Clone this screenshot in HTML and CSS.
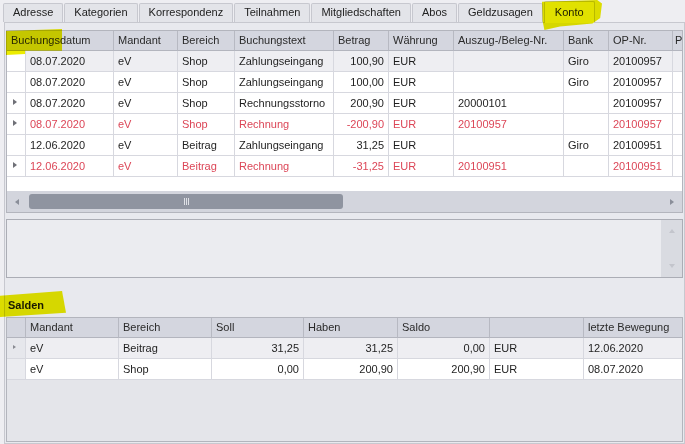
FILE: index.html
```html
<!DOCTYPE html>
<html lang="de">
<head>
<meta charset="utf-8">
<title>Konto</title>
<link rel="stylesheet" href="styles.css">
</head>
<body>
<div class="tabs">
  <div class="tab">Adresse</div>
  <div class="tab">Kategorien</div>
  <div class="tab">Korrespondenz</div>
  <div class="tab">Teilnahmen</div>
  <div class="tab">Mitgliedschaften</div>
  <div class="tab">Abos</div>
  <div class="tab">Geldzusagen</div>
  <div class="tab active">Konto</div>
</div>
<div class="pane">
  <div class="grid main">
    <div class="row head">
      <div class="cell first">Buchungsdatum</div>
      <div class="cell">Mandant</div>
      <div class="cell">Bereich</div>
      <div class="cell">Buchungstext</div>
      <div class="cell">Betrag</div>
      <div class="cell">Währung</div>
      <div class="cell">Auszug-/Beleg-Nr.</div>
      <div class="cell">Bank</div>
      <div class="cell">OP-Nr.</div>
      <div class="cell clip">P</div>
    </div>
    <div class="row sel">
      <div class="cell ind"></div>
      <div class="cell">08.07.2020</div><div class="cell">eV</div><div class="cell">Shop</div><div class="cell">Zahlungseingang</div><div class="cell num">100,90</div><div class="cell">EUR</div><div class="cell"></div><div class="cell">Giro</div><div class="cell">20100957</div><div class="cell"></div>
    </div>
    <div class="row">
      <div class="cell ind"></div>
      <div class="cell">08.07.2020</div><div class="cell">eV</div><div class="cell">Shop</div><div class="cell">Zahlungseingang</div><div class="cell num">100,00</div><div class="cell">EUR</div><div class="cell"></div><div class="cell">Giro</div><div class="cell">20100957</div><div class="cell"></div>
    </div>
    <div class="row">
      <div class="cell ind"><span class="tri"></span></div>
      <div class="cell">08.07.2020</div><div class="cell">eV</div><div class="cell">Shop</div><div class="cell">Rechnungsstorno</div><div class="cell num">200,90</div><div class="cell">EUR</div><div class="cell">20000101</div><div class="cell"></div><div class="cell">20100957</div><div class="cell"></div>
    </div>
    <div class="row red">
      <div class="cell ind"><span class="tri"></span></div>
      <div class="cell">08.07.2020</div><div class="cell">eV</div><div class="cell">Shop</div><div class="cell">Rechnung</div><div class="cell num">-200,90</div><div class="cell">EUR</div><div class="cell">20100957</div><div class="cell"></div><div class="cell">20100957</div><div class="cell"></div>
    </div>
    <div class="row">
      <div class="cell ind"></div>
      <div class="cell">12.06.2020</div><div class="cell">eV</div><div class="cell">Beitrag</div><div class="cell">Zahlungseingang</div><div class="cell num">31,25</div><div class="cell">EUR</div><div class="cell"></div><div class="cell">Giro</div><div class="cell">20100951</div><div class="cell"></div>
    </div>
    <div class="row red">
      <div class="cell ind"><span class="tri"></span></div>
      <div class="cell">12.06.2020</div><div class="cell">eV</div><div class="cell">Beitrag</div><div class="cell">Rechnung</div><div class="cell num">-31,25</div><div class="cell">EUR</div><div class="cell">20100951</div><div class="cell"></div><div class="cell">20100951</div><div class="cell"></div>
    </div>
    <div class="filler"></div>
    <div class="hscroll">
      <span class="arrow-left"></span>
      <div class="thumb"><span class="grip"></span></div>
      <span class="arrow-right"></span>
    </div>
  </div>

  <div class="memo">
    <div class="vscroll">
      <span class="arrow-up"></span>
      <span class="arrow-down"></span>
    </div>
  </div>

  <div class="section-title">Salden</div>

  <div class="grid salden">
    <div class="row head">
      <div class="cell ind"></div>
      <div class="cell">Mandant</div>
      <div class="cell">Bereich</div>
      <div class="cell">Soll</div>
      <div class="cell">Haben</div>
      <div class="cell">Saldo</div>
      <div class="cell"></div>
      <div class="cell">letzte Bewegung</div>
    </div>
    <div class="row sel">
      <div class="cell ind"><span class="tri small"></span></div>
      <div class="cell">eV</div><div class="cell">Beitrag</div><div class="cell num">31,25</div><div class="cell num">31,25</div><div class="cell num">0,00</div><div class="cell">EUR</div><div class="cell">12.06.2020</div>
    </div>
    <div class="row">
      <div class="cell ind"></div>
      <div class="cell">eV</div><div class="cell">Shop</div><div class="cell num">0,00</div><div class="cell num">200,90</div><div class="cell num">200,90</div><div class="cell">EUR</div><div class="cell">08.07.2020</div>
    </div>
  </div>
</div>

<div class="mark mark-tab"></div>
<div class="mark mark-head"></div>
<div class="mark mark-salden"></div>
</body>
</html>
```

FILE: styles.css
```css
* { box-sizing: border-box; }

html, body { margin: 0; padding: 0; }

body {
  width: 685px;
  height: 444px;
  overflow: hidden;
  position: relative;
  background: #eeeef2;
  font-family: "Liberation Sans", Arial, sans-serif;
  font-size: 11px;
  color: #1e1e1e;
}

/* ---------- tabs ---------- */
.tabs {
  display: flex;
  align-items: flex-end;
  gap: 1px;
  height: 22px;
  padding: 0 0 0 3px;
}

.tab {
  height: 19px;
  line-height: 17px;
  padding: 0 9px;
  background: #e3e4e9;
  border: 1px solid #c7c8cf;
  border-bottom: none;
  border-radius: 2px 2px 0 0;
  color: #222;
  white-space: nowrap;
}

.tab.active {
  position: relative;
  z-index: 1;
  height: 22px;
  line-height: 21px;
  margin-bottom: -1px;
  padding: 0 10px;
  background: #f4f4f7;
}

/* ---------- pane ---------- */
.pane {
  height: 422px;
  margin-left: 4px;
  border: 1px solid #c7c8cf;
  background: #e8e9ee;
  padding: 7px 0 0 1px;
}

.grid {
  width: 677px;
  border: 1px solid #b3b5bd;
  background: #fff;
}

.row {
  display: grid;
  height: 21px;
}

.main .row {
  grid-template-columns: 19px 88px 64px 57px 99px 55px 65px 110px 45px 64px 1fr;
}

.salden .row {
  grid-template-columns: 19px 93px 93px 92px 94px 92px 94px 1fr;
}

.cell {
  border-right: 1px solid #d7d8df;
  border-bottom: 1px solid #d7d8df;
  padding: 0 4px;
  line-height: 20px;
  white-space: nowrap;
  overflow: hidden;
}

.cell:last-child { border-right: none; }

.cell.clip {
  padding: 0 0 0 2px;
  text-overflow: clip;
}

.num { text-align: right; }

.row.head { height: 20px; }

.head .cell {
  background: #d4d6df;
  border-right-color: #b7b9c2;
  border-bottom-color: #b3b5be;
  line-height: 19px;
  color: #2a2a2a;
}

.head .cell.first { grid-column: span 2; }

.row.sel .cell { background: #eeeef2; }
.main .row.sel .cell.ind { background: #fff; }

.red .cell { color: #dc4657; }

.ind {
  position: relative;
  padding: 0;
}

.tri {
  position: absolute;
  left: 6px;
  top: 6px;
  width: 0;
  height: 0;
  border-left: 4px solid #6f7077;
  border-top: 3.5px solid transparent;
  border-bottom: 3.5px solid transparent;
}

.tri.small {
  left: 6px;
  top: 7px;
  border-left: 3px solid #8a8b92;
  border-top: 2.5px solid transparent;
  border-bottom: 2.5px solid transparent;
}

.filler { height: 14px; }

/* ---------- horizontal scrollbar ---------- */
.hscroll {
  height: 21px;
  background: #d3d5dd;
  display: flex;
  align-items: center;
  padding: 0 8px;
}

.arrow-left {
  width: 0;
  height: 0;
  border-right: 4px solid #8a8e99;
  border-top: 3.5px solid transparent;
  border-bottom: 3.5px solid transparent;
}

.arrow-right {
  margin-left: auto;
  width: 0;
  height: 0;
  border-left: 4px solid #8a8e99;
  border-top: 3.5px solid transparent;
  border-bottom: 3.5px solid transparent;
}

.thumb {
  margin-left: 10px;
  width: 314px;
  height: 15px;
  border-radius: 3px;
  background: #8f94a0;
  display: flex;
  align-items: center;
  justify-content: center;
}

.grip {
  width: 5px;
  height: 7px;
  border-left: 1px solid #dfe1e6;
  border-right: 1px solid #dfe1e6;
  position: relative;
}

.grip::after {
  content: "";
  position: absolute;
  left: 1px;
  top: 0;
  width: 1px;
  height: 7px;
  background: #dfe1e6;
}

/* ---------- memo ---------- */
.memo {
  margin-top: 6px;
  width: 677px;
  height: 59px;
  border: 1px solid #abadb5;
  background: #ebecf0;
  display: flex;
  justify-content: flex-end;
}

.vscroll {
  width: 21px;
  background: #d9dbe1;
  display: flex;
  flex-direction: column;
  align-items: center;
  justify-content: space-between;
  padding: 9px 0 9px;
}

.arrow-up {
  width: 0;
  height: 0;
  border-bottom: 4px solid #c3c5cc;
  border-left: 3.5px solid transparent;
  border-right: 3.5px solid transparent;
}

.arrow-down {
  width: 0;
  height: 0;
  border-top: 4px solid #c3c5cc;
  border-left: 3.5px solid transparent;
  border-right: 3.5px solid transparent;
}

/* ---------- Salden ---------- */
.section-title {
  height: 39px;
  padding: 21px 0 0 2px;
  line-height: 13px;
  font-weight: bold;
  color: #1a1a1a;
}

.salden {
  height: 125px;
  background: #e4e5ea;
}

.salden .row .cell { background: #fff; }
.salden .row .cell.ind { background: #ebecf0; }
.salden .row.sel .cell { background: #eeeef2; }
.salden .row.sel .cell.ind { background: #e6e7ec; }
.salden .head .cell,
.salden .head .cell.ind { background: #d4d6df; }

/* ---------- marker highlights (overlay) ---------- */
.mark {
  position: absolute;
  z-index: 5;
  background: #ecec00;
  mix-blend-mode: multiply;
  pointer-events: none;
}

.mark-tab {
  left: 542px;
  top: 0;
  width: 60px;
  height: 30px;
  clip-path: polygon(0 6%, 92% 0, 100% 12%, 97% 60%, 84% 78%, 30% 88%, 4% 100%, 1% 70%);
}

.mark-head {
  left: 6px;
  top: 29px;
  width: 56px;
  height: 26px;
  clip-path: polygon(0 8%, 100% 0, 100% 84%, 34% 84%, 34% 96%, 0 100%);
}

.mark-salden {
  left: 0;
  top: 291px;
  width: 66px;
  height: 26px;
  clip-path: polygon(0 18%, 94% 0, 100% 84%, 0 100%);
}
```
